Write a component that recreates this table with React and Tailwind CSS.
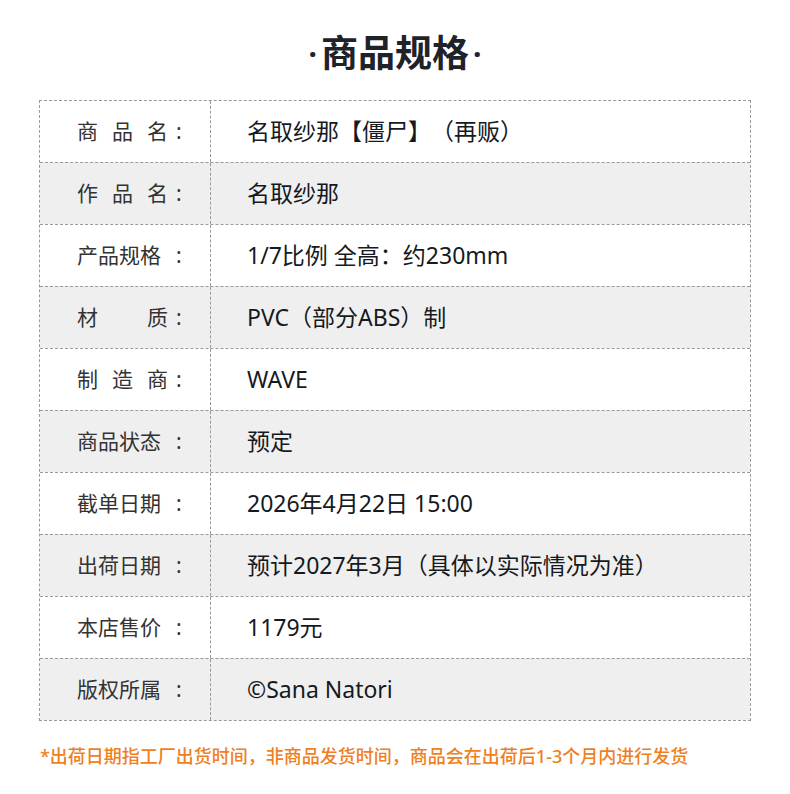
import React from 'react';

const rows = [
  { label: ['商', '品', '名'], value: '名取纱那【僵尸】（再贩）' },
  { label: ['作', '品', '名'], value: '名取纱那' },
  { label: ['产品规格'], value: '1/7比例 全高：约230mm' },
  { label: ['材', '质'], value: 'PVC（部分ABS）制' },
  { label: ['制', '造', '商'], value: 'WAVE' },
  { label: ['商品状态'], value: '预定' },
  { label: ['截单日期'], value: '2026年4月22日 15:00' },
  { label: ['出荷日期'], value: '预计2027年3月（具体以实际情况为准）' },
  { label: ['本店售价'], value: '1179元' },
  { label: ['版权所属'], value: '©Sana Natori' },
];

const font = { fontFamily: '"Noto Sans", "Noto Sans CJK SC", sans-serif' };

export default function App() {
  return (
    <div className="w-[790px] h-[794px] bg-white text-[#1f2329] [text-spacing-trim:space-all]" style={font}>
      <div className="pt-[27px] flex justify-center items-center">
        <span className="text-[30px] font-bold">·</span>
        <h1 className="text-[37px] leading-[52px] font-bold mx-[4px]">商品规格</h1>
        <span className="text-[30px] font-bold">·</span>
      </div>
      <div className="mt-[21px] mx-[39px] border border-dashed border-[#9a9a9a]">
        {rows.map((r, i) => (
          <div
            key={i}
            className={`flex ${i > 0 ? 'h-[62px] border-t border-dashed border-[#9a9a9a]' : 'h-[61px]'} ${i % 2 === 1 ? 'bg-[#efefef]' : 'bg-white'}`}
          >
            <div className="w-[171px] shrink-0 border-r border-dashed border-[#9a9a9a] flex items-center pl-[37px] text-[21px] text-[#333]">
              {r.label.length > 1 ? (
                <div className="w-[91px] flex justify-between">
                  {r.label.map((c, j) => (
                    <span key={j}>{c}</span>
                  ))}
                </div>
              ) : (
                <span className="w-[91px]">{r.label[0]}</span>
              )}
              <span className="ml-[8px]">:</span>
            </div>
            <div className="flex items-center pl-[36px] text-[23px] text-[#16191d]">{r.value}</div>
          </div>
        ))}
      </div>
      <p className="mt-[22px] ml-[40px] text-[18px] font-medium text-[#ef7f1f]">
        *出荷日期指工厂出货时间，非商品发货时间，商品会在出荷后1-3个月内进行发货
      </p>
    </div>
  );
}
